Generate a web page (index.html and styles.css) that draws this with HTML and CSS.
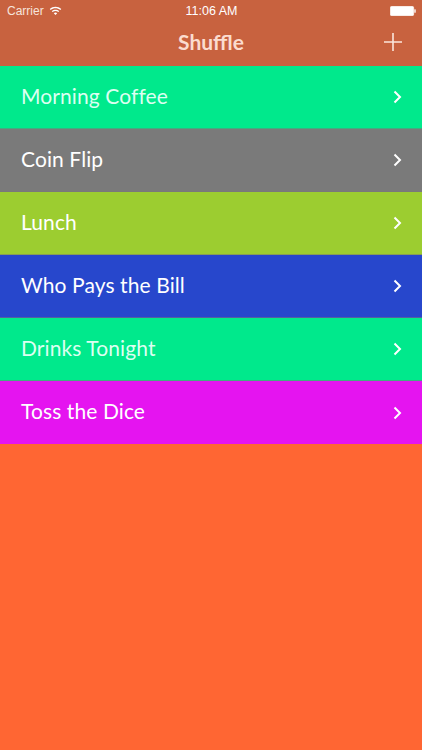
FILE: index.html
```html
<!DOCTYPE html>
<html lang="en">
<head>
<meta charset="utf-8">
<title>Shuffle</title>
<link rel="stylesheet" href="styles.css">
</head>
<body>
<header class="top">
  <div class="status">
    <div class="status-left">
      <span>Carrier</span>
      <svg class="wifi" viewBox="0 0 14 10" width="13" height="9"><path d="M0.6 3.4C4.2 0 9.8 0 13.4 3.4L12.4 4.5C9.3 1.7 4.7 1.7 1.6 4.5Z M2.9 5.7C5.2 3.6 8.8 3.6 11.1 5.7L10.1 6.8C8.4 5.3 5.6 5.3 3.9 6.8Z M5.1 8C6.2 7 7.8 7 8.9 8L7 10Z" fill="#fff"/></svg>
    </div>
    <span class="clock">11:06 AM</span>
    <div class="status-right">
      <svg viewBox="0 0 26 10" width="26" height="10"><rect x="0.3" y="0.3" width="23.4" height="9.4" rx="1.5" fill="#fff" stroke="#fff" stroke-width="0.6"/><rect x="24.3" y="3.2" width="1.4" height="3.6" rx="0.6" fill="#fff"/></svg>
    </div>
  </div>
  <div class="nav">
    <h1 class="title">Shuffle</h1>
    <svg class="add" viewBox="0 0 18 18" width="18" height="18"><path d="M9 0V18M0 9H18" stroke="#fbe6dc" stroke-width="1.6" fill="none"/></svg>
  </div>
</header>
<ul class="list">
  <li class="row mint"><span class="label">Morning Coffee</span><svg class="chev" viewBox="0 0 9 14" width="9" height="14"><path d="M1.5 1.5L7 7L1.5 12.5" stroke="#fff" stroke-width="2" fill="none"/></svg></li>
  <li class="row gray"><span class="label">Coin Flip</span><svg class="chev" viewBox="0 0 9 14" width="9" height="14"><path d="M1.5 1.5L7 7L1.5 12.5" stroke="#fff" stroke-width="2" fill="none"/></svg></li>
  <li class="row lime"><span class="label">Lunch</span><svg class="chev" viewBox="0 0 9 14" width="9" height="14"><path d="M1.5 1.5L7 7L1.5 12.5" stroke="#fff" stroke-width="2" fill="none"/></svg></li>
  <li class="row blue"><span class="label">Who Pays the Bill</span><svg class="chev" viewBox="0 0 9 14" width="9" height="14"><path d="M1.5 1.5L7 7L1.5 12.5" stroke="#fff" stroke-width="2" fill="none"/></svg></li>
  <li class="row mint"><span class="label">Drinks Tonight</span><svg class="chev" viewBox="0 0 9 14" width="9" height="14"><path d="M1.5 1.5L7 7L1.5 12.5" stroke="#fff" stroke-width="2" fill="none"/></svg></li>
  <li class="row magenta"><span class="label">Toss the Dice</span><svg class="chev" viewBox="0 0 9 14" width="9" height="14"><path d="M1.5 1.5L7 7L1.5 12.5" stroke="#fff" stroke-width="2" fill="none"/></svg></li>
</ul>
</body>
</html>
```
FILE: styles.css
```css
html, body {
  margin: 0;
  padding: 0;
  height: 100%;
  overflow: hidden;
}
body {
  background: #ff6633;
  font-family: "Lato", "Open Sans", sans-serif;
  color: #fff;
}
.top {
  height: 66px;
  background: #c8623f;
  box-sizing: border-box;
}
.status {
  height: 22px;
  display: grid;
  grid-template-columns: 1fr auto 1fr;
  align-items: center;
  padding: 0 6px 0 7px;
  font-family: "Liberation Sans", sans-serif;
  font-size: 12px;
  color: #f6e4dc;
}
.status-left {
  display: flex;
  align-items: center;
  gap: 5px;
}
.wifi {
  margin-bottom: 2px;
}
.clock {
  color: #fff;
  font-size: 12.5px;
}
.status-right {
  display: flex;
  justify-content: flex-end;
}
.nav {
  height: 40px;
  padding-bottom: 2px;
  box-sizing: border-box;
  display: flex;
  align-items: center;
  justify-content: center;
  position: relative;
}
.title {
  margin: 0;
  font-size: 21px;
  font-weight: 700;
  color: #fbdccf;
}
.add {
  position: absolute;
  right: 20px;
  top: 11px;
}
.list {
  list-style: none;
  margin: 0;
  padding: 0;
}
.row {
  height: 63px;
  box-sizing: border-box;
  display: flex;
  align-items: center;
  justify-content: space-between;
  padding: 0 20px 0 21px;
  font-size: 21px;
  letter-spacing: 0.1px;
  border-bottom: 1px solid rgba(120, 120, 120, 0.55);
}
.row:last-child {
  border-bottom: 0;
}
.label {
  padding-bottom: 4px;
}
.mint { background: #00e98c; color: #dcfff1; }
.gray { background: #7a7a7a; }
.lime { background: #9ccd30; }
.blue { background: #2747cc; }
.magenta { background: #e514f0; }
```
